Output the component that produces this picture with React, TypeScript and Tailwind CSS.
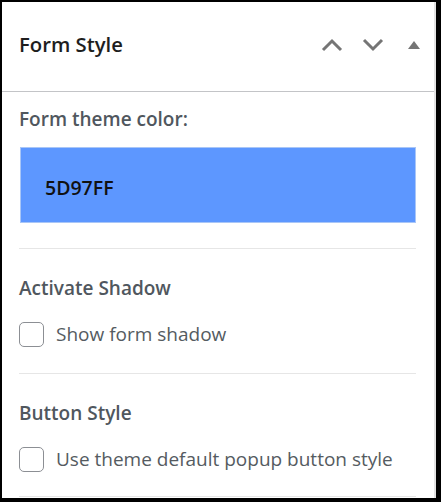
import React from "react"

const font = { fontFamily: '"Open Sans", "Noto Sans", sans-serif' }

const Chevron = ({ up }: { up?: boolean }) => (
    <svg width="22" height="14" viewBox="0 0 22 14" fill="none">
        <polyline
            points={up ? "2,12 11,3 20,12" : "2,2 11,11 20,2"}
            stroke="#757575"
            strokeWidth="3"
            strokeLinejoin="miter"
        />
    </svg>
)

const Check = ({ label }: { label: string }) => (
    <label className="flex items-center gap-[12px]">
        <span className="block w-[25px] h-[25px] rounded-[5px] border-[1.5px] border-[#8c8f94] bg-white" />
        <span className="text-[19px] leading-[25px] text-[#555b61]">{label}</span>
    </label>
)

export default function App() {
    return (
        <div className="w-[441px] h-[502px] bg-black pt-[2px] pl-[2px] pr-[5px] pb-[4px]" style={font}>
            <div className="h-full bg-white border-r-2 border-[#e2e2e2] overflow-hidden">
                <div className="h-[90px] flex items-center justify-between pl-[17px] pr-[14px] pb-[4px] border-b border-[#c3c4c7]">
                    <h2 className="text-[20.3px] font-semibold text-[#1e1e1e]">Form Style</h2>
                    <div className="flex items-center">
                        <Chevron up />
                        <span className="w-[19px]" />
                        <Chevron />
                        <span className="w-[24px]" />
                        <svg width="12" height="8" viewBox="0 0 12 8">
                            <polygon points="6,0 12,8 0,8" fill="#757575" />
                        </svg>
                    </div>
                </div>

                <div className="pl-[17px] pr-[18px]">
                    <p className="mt-[15px] text-[19px] font-semibold text-[#50575e] leading-[24px]">Form theme color:</p>
                    <div className="mt-[16px] ml-px h-[76px] bg-[#5D97FF] border border-[#a9c6f7] flex items-center pl-[24px] pt-[6px]">
                        <span className="text-[19.5px] font-semibold text-[#111]">5D97FF</span>
                    </div>
                    <div className="mt-[25px] border-t border-[#e6e6e6]" />

                    <p className="mt-[27px] text-[19px] font-semibold text-[#50575e] leading-[24px]">Activate Shadow</p>
                    <div className="mt-[22px]">
                        <Check label="Show form shadow" />
                    </div>
                    <div className="mt-[26px] border-t border-[#e6e6e6]" />

                    <p className="mt-[27px] text-[19px] font-semibold text-[#50575e] leading-[24px]">Button Style</p>
                    <div className="mt-[22px]">
                        <Check label="Use theme default popup button style" />
                    </div>
                    <div className="mt-[24px] border-t border-[#e6e6e6]" />
                </div>
            </div>
        </div>
    )
}
